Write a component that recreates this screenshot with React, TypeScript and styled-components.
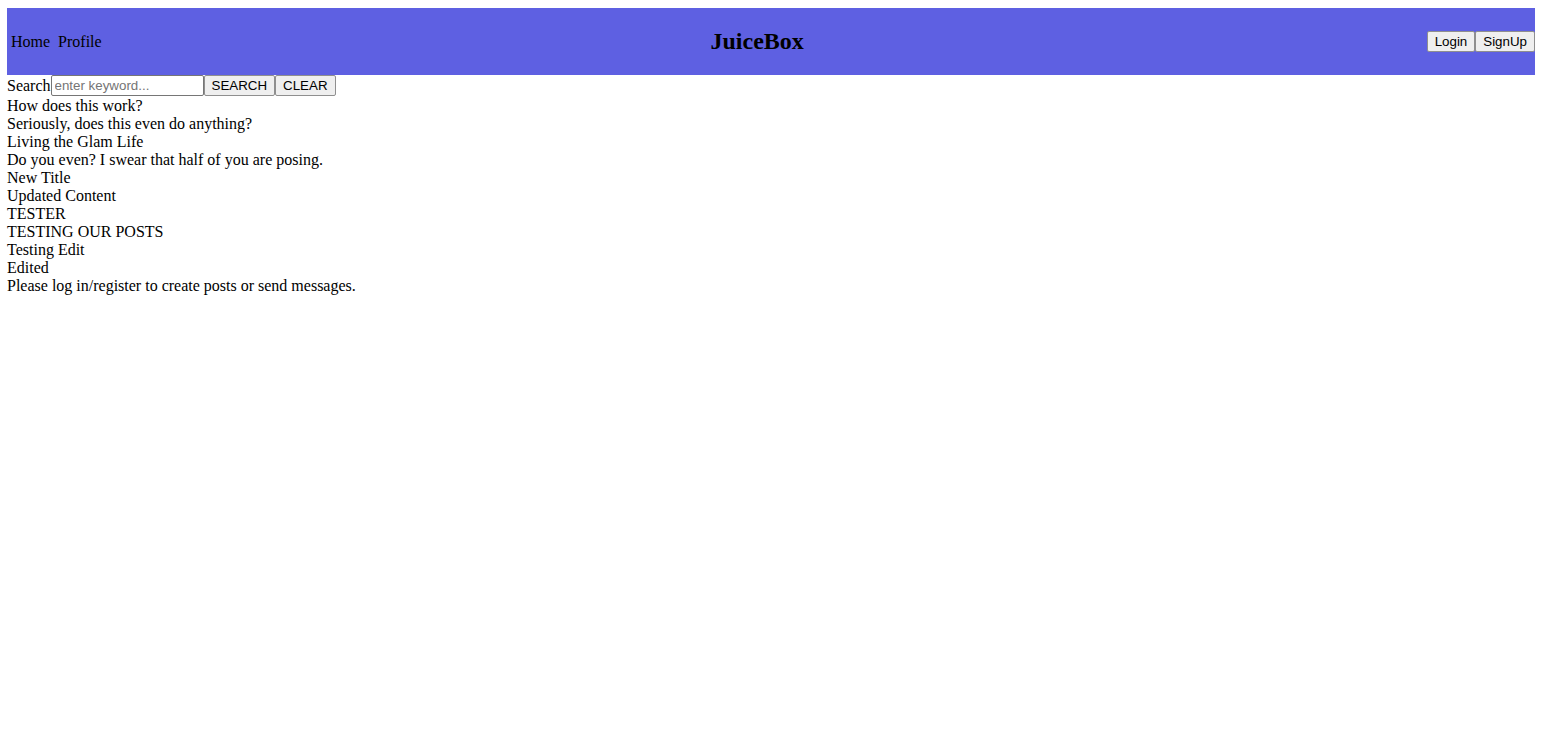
import React from "react";
import styled, { createGlobalStyle } from "styled-components";

const Global = createGlobalStyle`
  body {
    margin: 8px 6px 8px 7px;
    font-family: "Liberation Serif", "Times New Roman", serif;
    font-size: 16px;
    color: #000;
    background: #fff;
  }
`;

const Header = styled.header`
  display: flex;
  align-items: center;
  justify-content: space-between;
  background: #5e60e2;
`;

const Nav = styled.nav`
  display: flex;
  gap: 8px;
  padding-left: 4px;
  padding-top: 1px;
`;

const NavLink = styled.a`
  color: #000;
  text-decoration: none;
  cursor: pointer;
`;

const Brand = styled.h2`
  margin: 20px 14px 20px 0;
  font-size: 24px;
  font-weight: bold;
`;

const Actions = styled.div`
  display: flex;
`;

const Button = styled.button`
  font: 13.33px "Liberation Sans", Arial, sans-serif;
  background: #efefef;
  border: 1px solid #8f8f8f;
  border-radius: 2px;
  padding: 1px 7px;
  height: 21px;
  color: #000;
  cursor: pointer;
`;

const SearchRow = styled.form`
  display: flex;
  align-items: flex-start;
  padding-bottom: 1px;
`;

const Label = styled.label`
  line-height: 18px;
  align-self: center;
`;

const Input = styled.input`
  box-sizing: border-box;
  font: 13.33px "Liberation Sans", Arial, sans-serif;
  width: 153px;
  height: 21px;
  padding: 1px 3px;
  border: 1px solid #767676;
  border-radius: 2px;
  &::placeholder {
    color: #757575;
  }
`;

const Posts = styled.div`
  display: flex;
  flex-direction: column;
`;

const Line = styled.div`
  line-height: 18px;
`;

const posts = [
  ["How does this work?", "Seriously, does this even do anything?"],
  ["Living the Glam Life", "Do you even? I swear that half of you are posing."],
  ["New Title", "Updated Content"],
  ["TESTER", "TESTING OUR POSTS"],
  ["Testing Edit", "Edited"],
];

export default function App() {
  return (
    <>
      <Global />
      <Header>
        <Nav>
          <NavLink>Home</NavLink>
          <NavLink>Profile</NavLink>
        </Nav>
        <Brand>JuiceBox</Brand>
        <Actions>
          <Button>Login</Button>
          <Button>SignUp</Button>
        </Actions>
      </Header>
      <SearchRow onSubmit={(e) => e.preventDefault()}>
        <Label>Search</Label>
        <Input placeholder="enter keyword..." />
        <Button type="submit">SEARCH</Button>
        <Button type="button">CLEAR</Button>
      </SearchRow>
      <Posts>
        {posts.map(([t, c]) => (
          <React.Fragment key={t}>
            <Line>{t}</Line>
            <Line>{c}</Line>
          </React.Fragment>
        ))}
        <Line>Please log in/register to create posts or send messages.</Line>
      </Posts>
    </>
  );
}
